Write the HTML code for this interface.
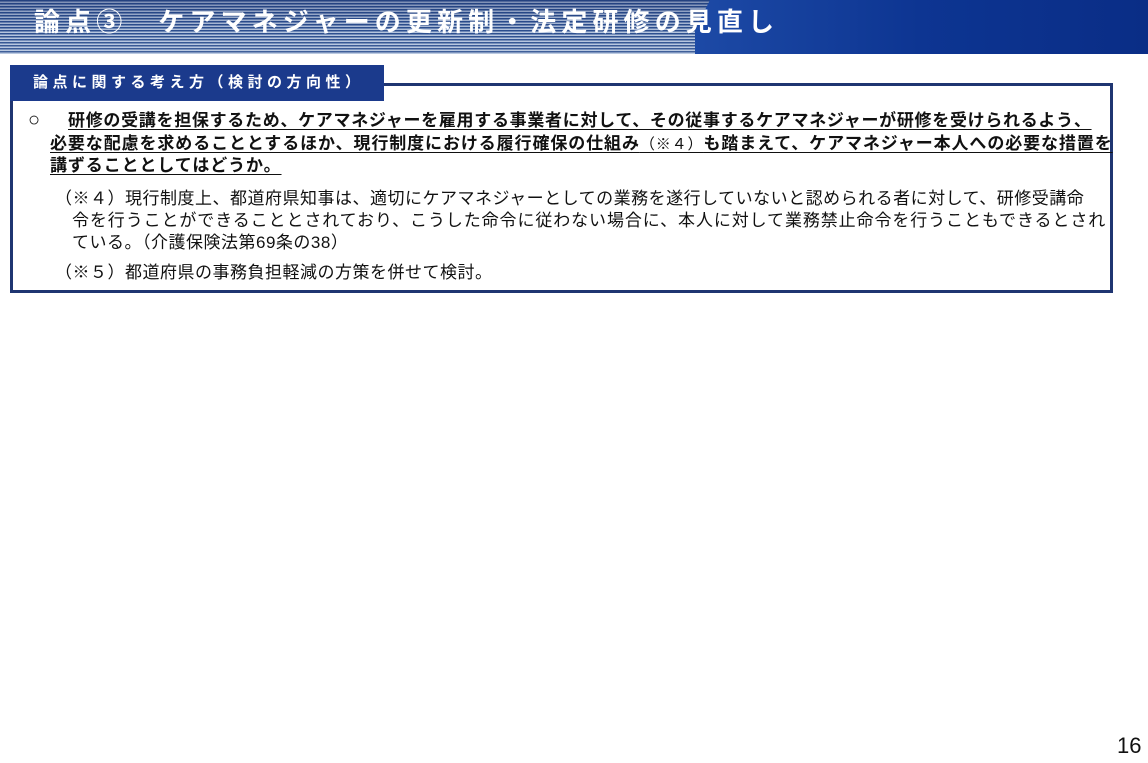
<!DOCTYPE html>
<html><head><meta charset="utf-8"><style>
html,body{margin:0;padding:0;background:#fff;}
body{width:1148px;height:763px;position:relative;overflow:hidden;font-family:"Liberation Sans","Noto Sans CJK JP",sans-serif;}
.hdr{position:absolute;left:0;top:0;width:1148px;height:54px;
background:repeating-linear-gradient(180deg,#2c4f8f 0,#2c4f8f 1.5px,#b4c4de 1.5px,#b4c4de 3px);}
.hdr .fade{position:absolute;left:0;top:0;width:1148px;height:54px;background:linear-gradient(180deg,rgba(20,40,100,.35),rgba(255,255,255,0) 60%,rgba(255,255,255,.1));}
.hdr .r{position:absolute;top:0;left:690px;width:458px;height:54px;background:linear-gradient(90deg,#1d4aa6,#0d3592 50%,#0a2d86);clip-path:polygon(20px 0,100% 0,100% 100%,5px 100%,5px 30px);}
.hdr .t{position:absolute;left:34px;top:6px;color:#fff;font-weight:bold;font-size:26px;letter-spacing:5.1px;white-space:nowrap;line-height:32px;}
.tab{position:absolute;left:10px;top:65px;width:374px;height:36px;background:#1b3a8c;color:#fff;font-weight:bold;font-size:15px;letter-spacing:4.5px;line-height:36px;padding-left:23px;box-sizing:border-box;white-space:nowrap;}
.box{position:absolute;left:10px;top:83px;width:1103px;height:210px;border:3px solid #1f3571;border-top:none;box-sizing:border-box;}
.top{position:absolute;left:384px;top:83px;width:729px;height:3px;background:#1f3571;}
.l{position:absolute;white-space:nowrap;font-size:17px;line-height:22px;color:#111;}
.b{font-weight:bold;text-decoration:underline;text-underline-offset:3px;}
.n{letter-spacing:0.5px;}
.pg{position:absolute;left:1117px;top:733px;font-size:22px;color:#111;}
</style></head><body>
<div class="hdr"><div class="fade"></div><div class="r"></div><div class="t">論点③　ケアマネジャーの更新制・法定研修の見直し</div></div>
<div class="box"></div><div class="top"></div>
<div class="tab">論点に関する考え方（検討の方向性）</div>
<div class="l" style="left:28px;top:109px;font-size:20px;">○</div>
<div class="l b" style="left:68px;top:110px;letter-spacing:0.7px;">研修の受講を担保するため、ケアマネジャーを雇用する事業者に対して、その従事するケアマネジャーが研修を受けられるよう、</div>
<div class="l b" style="left:50px;top:133px;letter-spacing:0.9px;">必要な配慮を求めることとするほか、現行制度における履行確保の仕組み<span style="font-weight:normal;font-size:15px;">（※４）</span>も踏まえて、ケアマネジャー本人への必要な措置を</div>
<div class="l b" style="left:50px;top:155px;letter-spacing:0.9px;">講ずることとしてはどうか。</div>
<div class="l n" style="left:55px;top:188px;">（※４）現行制度上、都道府県知事は、適切にケアマネジャーとしての業務を遂行していないと認められる者に対して、研修受講命</div>
<div class="l n" style="left:72px;top:210px;letter-spacing:0.9px;">令を行うことができることとされており、こうした命令に従わない場合に、本人に対して業務禁止命令を行うこともできるとされ</div>
<div class="l n" style="left:72px;top:232px;">ている。（介護保険法第69条の38）</div>
<div class="l n" style="left:55px;top:262px;">（※５）都道府県の事務負担軽減の方策を併せて検討。</div>
<div class="pg">16</div>
</body></html>
